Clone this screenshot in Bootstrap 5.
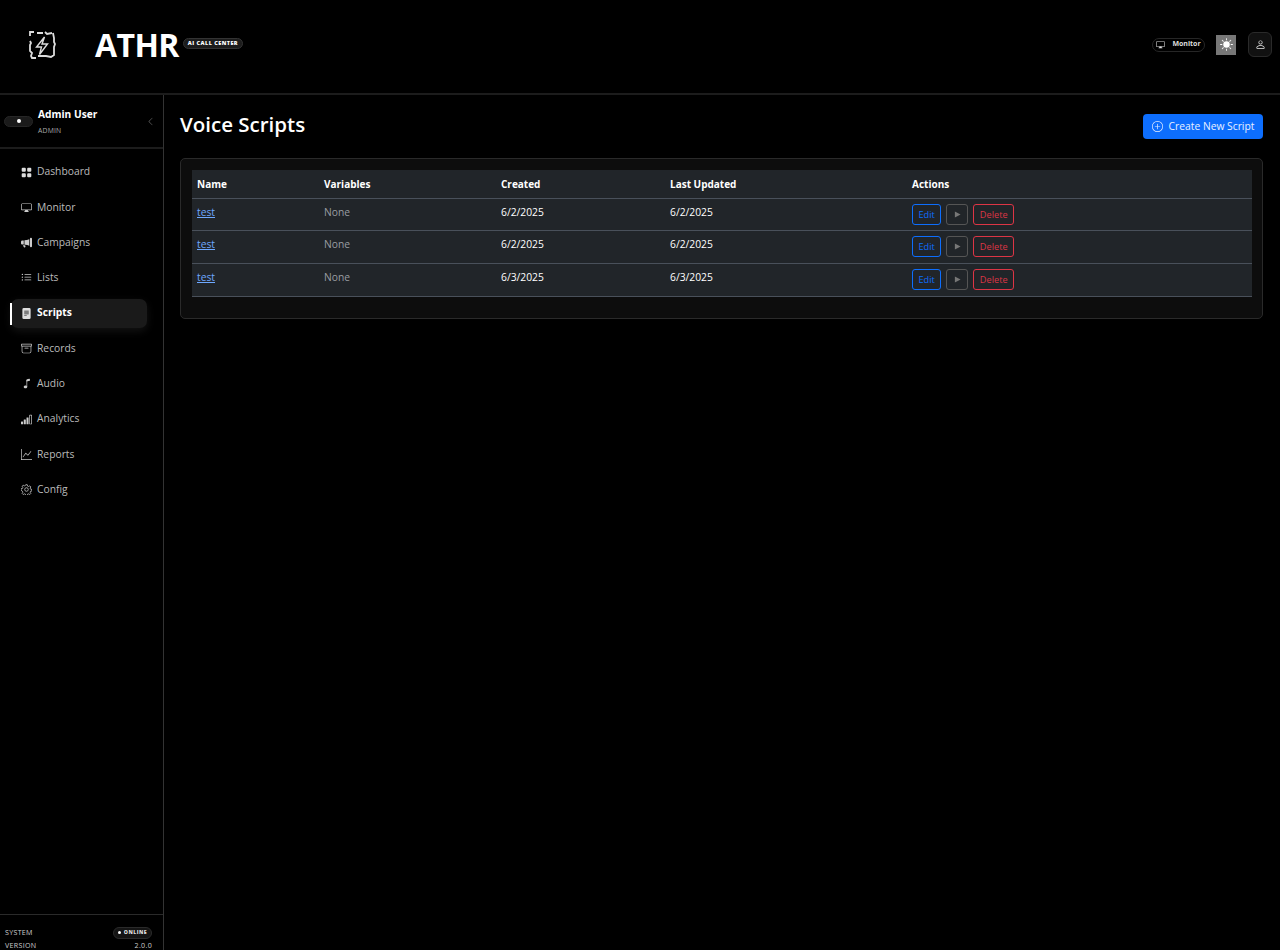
<!DOCTYPE html>
<html lang="en" data-bs-theme="dark">
<head>
<meta charset="utf-8">
<title>Voice Scripts</title>
<link href="https://cdn.jsdelivr.net/npm/bootstrap@5.3.0/dist/css/bootstrap.min.css" rel="stylesheet">
<style>
html,body{height:950px;overflow:hidden;background:#000;}
body{font-family:"Open Sans","Noto Sans",sans-serif;color:#fff;}
.top-bar{height:95px;border-bottom:2px solid #1c1c1c;padding:0 8px 4px 27px;}
.brand-name{font-size:32px;font-weight:700;line-height:1;margin-left:38px;letter-spacing:-.6px;}
.brand-pill{font-size:5.5px;font-weight:800;letter-spacing:.45px;background:#1c1c1c;border:1px solid #333;border-radius:20px;padding:1px 4px;margin-left:4px;line-height:7px;margin-top:-2px;}
.monitor-pill{font-size:7px;font-weight:700;color:#ddd;border:1px solid #262626;border-radius:20px;height:14px;width:53px;gap:7px;margin-right:11px;}
.sun-box{width:20px;height:20px;background:#777;margin-right:12px;}
.user-box{width:24px;height:25px;background:#111;border:1px solid #2a2a2a;border-radius:6px;}
.side-panel{width:164px;height:855px;border-right:1px solid #333;flex:none;}
.user-head{height:54px;border-bottom:2px solid #1c1c1c;padding:0 8px 0 4px;flex:none;}
.toggle-pill{width:29px;height:11px;border-radius:8px;background:#1a1a1a;border:1px solid #262626;margin-right:5px;}
.toggle-pill i{width:4px;height:4px;background:#fff;border-radius:50%;display:block;}
.user-text{margin-top:3px;}
.user-name{font-size:10.2px;font-weight:700;line-height:15px;margin-top:-3px;}
.user-role{font-size:6.8px;color:#aaa;line-height:9px;margin-top:4px;letter-spacing:.2px;}
.side-menu{padding-top:8.5px;gap:6.3px;}
.menu-link{height:29px;margin:0 16px 0 11px;padding-left:10px;gap:5px;font-size:10.3px;color:#bbb;border-radius:7px;text-decoration:none;position:relative;}
.menu-link svg{width:11px;height:11px;flex:none;}
.menu-link.is-active{color:#fff;font-weight:700;background:#1a1a1a;box-shadow:0 3px 8px rgba(40,40,40,.5);}
.menu-link.is-active::before{content:"";position:absolute;left:-1px;top:4px;bottom:3px;width:1.5px;background:#fff;}
.side-foot{height:36px;border-top:1px solid #2a2a2a;padding:11px 11px 0 5px;font-size:7.1px;color:#ccc;letter-spacing:.3px;overflow:hidden;flex:none;}
.foot-row{height:13px;}
.online-pill{font-size:5.2px;font-weight:800;letter-spacing:.45px;background:#141414;border:1px solid #2a2a2a;border-radius:20px;padding:1px 4px;height:12px;gap:3px;color:#ddd;}
.online-pill i{width:3px;height:3px;background:#fff;border-radius:50%;display:block;}
.content-area{padding:19px 17px 0 16px;}
.page-title{font-size:20.5px;font-weight:600;margin:-5px 0 0;line-height:24px;}
.new-btn{background:#0d6efd;color:#e8f0ff;font-size:10.3px;height:25px;width:120px;border-radius:4px;gap:6px;border:0;padding:0;}
.new-btn svg{width:11px;height:11px;}
.head-row{height:25px;margin-bottom:19px;}
.script-panel{background:#0d0d0d;border:1px solid #2a2a2a;border-radius:5px;padding:11px 10px 21px 11px;}
.script-table{--bs-table-bg:#212529;--bs-table-color:#fff;width:1060px;margin:0;font-size:10.3px;table-layout:fixed;border-color:#49505a;}
.script-table th{height:28px;padding:1px 5px 0;font-weight:700;vertical-align:middle;border-bottom:1px solid #49505a;font-size:10px;}
.script-table td{height:32.7px;padding:6px 5px 0;vertical-align:top;border-bottom:1px solid #49505a;}
.script-table td.cell-btns{padding-top:5px;}
.script-link{color:#6ea8fe;}
.none-text{color:#9a9da1;}
.tiny-btn{font-size:9.2px;height:21px;padding:0 5.5px;border-radius:3px;--bs-btn-bg:transparent;line-height:19px;}
.tiny-btn svg{width:7px;height:7px;}
.btn-play{width:22px;padding:0;border-color:#555;color:#6c757d;}
.cell-acts{gap:5px;}
</style>
</head>
<body>
<header class="top-bar d-flex align-items-center">
  <svg width="30" height="30" viewBox="0 0 30 30" fill="none" stroke="#ddd" stroke-width="1.8" aria-hidden="true">
    <path d="M3 6V2h4M10 3h6M18 2l2 2 5-1M26 3l1 5v4l1 2-1 3v8l-3 2-5-1H11M9 28H5l-1-2 1-3-2-2v-6l1-2-1-2"/>
    <path d="M17.500 7 9.500 17h5l-2 7.500 8-10.500h-5.500z" stroke-width="1.400"/>
  </svg>
  <span class="brand-name">ATHR</span>
  <span class="brand-pill">AI CALL CENTER</span>
  <div class="ms-auto d-flex align-items-center">
    <span class="monitor-pill d-flex align-items-center justify-content-center">
      <svg width="9" height="9" viewBox="0 0 16 16" fill="#ddd"><path d="M0 4s0-2 2-2h12s2 0 2 2v6s0 2-2 2h-4c0 .667.083 1.167.25 1.5H11a.5.5 0 0 1 0 1H5a.5.5 0 0 1 0-1h.75c.167-.333.25-.833.25-1.5H2s-2 0-2-2V4zm1.398-.855a.758.758 0 0 0-.254.302A1.46 1.46 0 0 0 1 4.01V10c0 .325.078.502.145.602.07.105.17.188.302.254a1.464 1.464 0 0 0 .538.143L2.01 11H14c.325 0 .502-.078.602-.145a.758.758 0 0 0 .254-.302 1.464 1.464 0 0 0 .143-.538L15 9.99V4c0-.325-.078-.502-.145-.602a.757.757 0 0 0-.302-.254A1.46 1.46 0 0 0 13.99 3H2c-.325 0-.502.078-.602.145z"/></svg>
      Monitor
    </span>
    <span class="sun-box d-flex align-items-center justify-content-center">
      <svg width="13" height="13" viewBox="0 0 16 16" fill="#fff"><path d="M8 12a4 4 0 1 0 0-8 4 4 0 0 0 0 8zM8 0a.5.5 0 0 1 .5.5v2a.5.5 0 0 1-1 0v-2A.5.5 0 0 1 8 0zm0 13a.5.5 0 0 1 .5.5v2a.5.5 0 0 1-1 0v-2A.5.5 0 0 1 8 13zm8-5a.5.5 0 0 1-.5.5h-2a.5.5 0 0 1 0-1h2a.5.5 0 0 1 .5.5zM3 8a.5.5 0 0 1-.5.5h-2a.5.5 0 0 1 0-1h2A.5.5 0 0 1 3 8zm10.657-5.657a.5.5 0 0 1 0 .707l-1.414 1.415a.5.5 0 1 1-.707-.708l1.414-1.414a.5.5 0 0 1 .707 0zm-9.193 9.193a.5.5 0 0 1 0 .707L3.05 13.657a.5.5 0 0 1-.707-.707l1.414-1.414a.5.5 0 0 1 .707 0zm9.193 2.121a.5.5 0 0 1-.707 0l-1.414-1.414a.5.5 0 0 1 .707-.707l1.414 1.414a.5.5 0 0 1 0 .707zM4.464 4.465a.5.5 0 0 1-.707 0L2.343 3.05a.5.5 0 1 1 .707-.707l1.414 1.414a.5.5 0 0 1 0 .708z"/></svg>
    </span>
    <span class="user-box d-flex align-items-center justify-content-center">
      <svg width="11" height="11" viewBox="0 0 16 16" fill="#eee"><path d="M8 8a3 3 0 1 0 0-6 3 3 0 0 0 0 6zm2-3a2 2 0 1 1-4 0 2 2 0 0 1 4 0zm4 8c0 1-1 1-1 1H3s-1 0-1-1 1-4 6-4 6 3 6 4zm-1-.004c-.001-.246-.154-.986-.832-1.664C11.516 10.68 10.289 10 8 10c-2.29 0-3.516.68-4.168 1.332-.678.678-.83 1.418-.832 1.664h10z"/></svg>
    </span>
  </div>
</header>
<div class="d-flex">
  <aside class="side-panel d-flex flex-column">
    <div class="user-head d-flex align-items-center">
      <span class="toggle-pill d-flex align-items-center justify-content-center"><i></i></span>
      <div class="user-text">
        <div class="user-name">Admin User</div>
        <div class="user-role">ADMIN</div>
      </div>
      <svg class="ms-auto" width="9" height="9" viewBox="0 0 16 16" fill="#666"><path fill-rule="evenodd" d="M11.354 1.646a.5.5 0 0 1 0 .708L5.707 8l5.647 5.646a.5.5 0 0 1-.708.708l-6-6a.5.5 0 0 1 0-.708l6-6a.5.5 0 0 1 .708 0z"/></svg>
    </div>
    <nav class="side-menu d-flex flex-column">
      <a class="menu-link d-flex align-items-center" href="#"><svg viewBox="0 0 16 16" fill="#ddd"><path d="M1 2.500A1.500 1.500 0 0 1 2.500 1h3A1.500 1.500 0 0 1 7 2.500v3A1.500 1.500 0 0 1 5.500 7h-3A1.500 1.500 0 0 1 1 5.500v-3zm8 0A1.500 1.500 0 0 1 10.500 1h3A1.500 1.500 0 0 1 15 2.500v3A1.500 1.500 0 0 1 13.500 7h-3A1.500 1.500 0 0 1 9 5.500v-3zm-8 8A1.500 1.500 0 0 1 2.500 9h3A1.500 1.500 0 0 1 7 10.500v3A1.500 1.500 0 0 1 5.500 15h-3A1.500 1.500 0 0 1 1 13.500v-3zm8 0A1.500 1.500 0 0 1 10.500 9h3a1.500 1.500 0 0 1 1.500 1.500v3a1.500 1.500 0 0 1-1.500 1.500h-3A1.500 1.500 0 0 1 9 13.500v-3z"/></svg>Dashboard</a>
      <a class="menu-link d-flex align-items-center" href="#"><svg viewBox="0 0 16 16" fill="#ccc"><path d="M0 4s0-2 2-2h12s2 0 2 2v6s0 2-2 2h-4c0 .667.083 1.167.25 1.500H11a.5.5 0 0 1 0 1H5a.5.5 0 0 1 0-1h.75c.167-.333.25-.833.25-1.500H2s-2 0-2-2V4zm1.398-.855a.758.758 0 0 0-.254.302A1.460 1.460 0 0 0 1 4.010V10c0 .325.078.502.145.602.07.105.17.188.302.254a1.464 1.464 0 0 0 .538.143L2.010 11H14c.325 0 .502-.078.602-.145a.758.758 0 0 0 .254-.302 1.464 1.464 0 0 0 .143-.538L15 9.990V4c0-.325-.078-.502-.145-.602a.757.757 0 0 0-.302-.254A1.460 1.460 0 0 0 13.990 3H2c-.325 0-.502.078-.602.145z"/></svg>Monitor</a>
      <a class="menu-link d-flex align-items-center" href="#"><svg viewBox="0 0 16 16" fill="#ccc"><path d="M13 2.500a1.500 1.500 0 0 1 3 0v11a1.500 1.500 0 0 1-3 0v-11zm-1 .724c-2.067.95-4.539 1.481-7 1.656v6.237a25.222 25.222 0 0 1 1.088.085c2.053.204 4.038.668 5.912 1.560V3.224zm-8 7.841V4.934c-.68.027-1.399.043-2.008.053A2.020 2.020 0 0 0 0 7v2c0 1.106.896 1.996 1.994 2.009a68.140 68.140 0 0 1 .496.008 64 64 0 0 1 1.510.048zm1.390 1.081c.285.021.569.047.850.078l.253 1.690a1 1 0 0 1-.983 1.187h-.548a1 1 0 0 1-.916-.599l-1.314-2.480a65.810 65.810 0 0 1 1.692.064c.327.017.650.037.966.060z"/></svg>Campaigns</a>
      <a class="menu-link d-flex align-items-center" href="#"><svg viewBox="0 0 16 16" fill="#ccc"><path fill-rule="evenodd" d="M5 11.500a.5.5 0 0 1 .5-.5h9a.5.5 0 0 1 0 1h-9a.5.5 0 0 1-.5-.5zm0-4a.5.5 0 0 1 .5-.5h9a.5.5 0 0 1 0 1h-9a.5.5 0 0 1-.5-.5zm0-4a.5.5 0 0 1 .5-.5h9a.5.5 0 0 1 0 1h-9a.5.5 0 0 1-.5-.5zm-3 1a1 1 0 1 0 0-2 1 1 0 0 0 0 2zm0 4a1 1 0 1 0 0-2 1 1 0 0 0 0 2zm0 4a1 1 0 1 0 0-2 1 1 0 0 0 0 2z"/></svg>Lists</a>
      <a class="menu-link is-active d-flex align-items-center" href="#"><svg viewBox="0 0 16 16" fill="#ddd"><path d="M12 0H4a2 2 0 0 0-2 2v12a2 2 0 0 0 2 2h8a2 2 0 0 0 2-2V2a2 2 0 0 0-2-2zM5 4h6a.5.5 0 0 1 0 1H5a.5.5 0 0 1 0-1zm-.5 2.500A.5.5 0 0 1 5 6h6a.5.5 0 0 1 0 1H5a.5.5 0 0 1-.5-.5zM5 8h6a.5.5 0 0 1 0 1H5a.5.5 0 0 1 0-1zm0 2h3a.5.5 0 0 1 0 1H5a.5.5 0 0 1 0-1z"/></svg>Scripts</a>
      <a class="menu-link d-flex align-items-center" href="#"><svg viewBox="0 0 16 16" fill="#ccc"><path d="M0 2a1 1 0 0 1 1-1h14a1 1 0 0 1 1 1v2a1 1 0 0 1-1 1v7.500a2.500 2.500 0 0 1-2.500 2.500h-9A2.500 2.500 0 0 1 1 12.500V5a1 1 0 0 1-1-1V2zm2 3v7.500A1.500 1.500 0 0 0 3.500 14h9a1.500 1.500 0 0 0 1.500-1.500V5H2zm13-3H1v2h14V2zM5 7.500a.5.5 0 0 1 .5-.5h5a.5.5 0 0 1 0 1h-5a.5.5 0 0 1-.5-.5z"/></svg>Records</a>
      <a class="menu-link d-flex align-items-center" href="#"><svg viewBox="0 0 16 16" fill="#ccc"><path d="M9 13c0 1.105-1.120 2-2.500 2S4 14.105 4 13s1.120-2 2.500-2 2.500.895 2.500 2z"/><path fill-rule="evenodd" d="M9 3v10H8V3h1z"/><path d="M8 2.820a1 1 0 0 1 .804-.981l3-.600A1 1 0 0 1 13 2.220V4L8 5V2.820z"/></svg>Audio</a>
      <a class="menu-link d-flex align-items-center" href="#"><svg viewBox="0 0 16 16" fill="#ccc"><path d="M0 11.500a.5.5 0 0 1 .5-.5h2a.5.5 0 0 1 .5.5v3a.5.5 0 0 1-.5.5h-2a.5.5 0 0 1-.5-.5v-3zm4-3a.5.5 0 0 1 .5-.5h2a.5.5 0 0 1 .5.5v6a.5.5 0 0 1-.5.5h-2a.5.5 0 0 1-.5-.5v-6zm4-3a.5.5 0 0 1 .5-.5h2a.5.5 0 0 1 .5.5v9a.5.5 0 0 1-.5.5h-2a.5.5 0 0 1-.5-.5v-9zM12 2a1 1 0 0 1 1-1h2a1 1 0 0 1 1 1v12a1 1 0 0 1-1 1h-2a1 1 0 0 1-1-1V2zm1 12h2V2h-2v12z"/></svg>Analytics</a>
      <a class="menu-link d-flex align-items-center" href="#"><svg viewBox="0 0 16 16" fill="#ccc"><path fill-rule="evenodd" d="M0 0h1v15h15v1H0V0zm14.817 3.113a.5.5 0 0 1 .07.704l-4.500 5.500a.5.5 0 0 1-.74.037L7.060 6.767l-3.656 5.027a.5.5 0 0 1-.808-.588l4-5.500a.5.5 0 0 1 .758-.060l2.609 2.610 4.150-5.073a.5.5 0 0 1 .704-.070z"/></svg>Reports</a>
      <a class="menu-link d-flex align-items-center" href="#"><svg viewBox="0 0 16 16" fill="none" stroke="#ccc" stroke-width="1.1"><circle cx="8" cy="8" r="2.600"/><path d="M6.900 1h2.200l.4 2 1.500.700 1.800-1 1.500 1.500-1 1.800.6 1.500 2.100.4v2.200l-2.100.4-.6 1.500 1 1.800-1.500 1.500-1.800-1-1.500.6-.4 2.100H6.900l-.4-2.100-1.500-.6-1.800 1-1.500-1.500 1-1.800-.6-1.500L0 9.100V6.900l2.100-.4.6-1.500-1-1.800 1.500-1.500 1.800 1 1.500-.7z"/></svg>Config</a>
    </nav>
    <div class="side-foot mt-auto">
      <div class="foot-row d-flex justify-content-between align-items-center"><span>SYSTEM</span><span class="online-pill d-flex align-items-center"><i></i>ONLINE</span></div>
      <div class="foot-row d-flex justify-content-between align-items-center"><span>VERSION</span><span>2.0.0</span></div>
    </div>
  </aside>
  <main class="content-area flex-grow-1">
    <div class="head-row d-flex justify-content-between align-items-center">
      <h1 class="page-title">Voice Scripts</h1>
      <button class="new-btn btn d-flex align-items-center justify-content-center" type="button"><svg viewBox="0 0 16 16" fill="currentColor"><path d="M8 15A7 7 0 1 1 8 1a7 7 0 0 1 0 14zm0 1A8 8 0 1 0 8 0a8 8 0 0 0 0 16z"/><path d="M8 4a.5.5 0 0 1 .5.5v3h3a.5.5 0 0 1 0 1h-3v3a.5.5 0 0 1-1 0v-3h-3a.5.5 0 0 1 0-1h3v-3A.5.5 0 0 1 8 4z"/></svg>Create New Script</button>
    </div>
    <div class="script-panel">
      <table class="table script-table">
        <colgroup><col style="width:127px"><col style="width:177px"><col style="width:169px"><col style="width:242px"><col></colgroup>
        <thead><tr><th>Name</th><th>Variables</th><th>Created</th><th>Last Updated</th><th>Actions</th></tr></thead>
        <tbody>
          <tr><td><a class="script-link" href="#">test</a></td><td class="none-text">None</td><td>6/2/2025</td><td>6/2/2025</td><td class="cell-btns"><div class="d-flex cell-acts"><button class="btn btn-outline-primary tiny-btn" type="button">Edit</button><button class="btn btn-outline-secondary tiny-btn btn-play d-flex align-items-center justify-content-center" type="button" aria-label="Play"><svg viewBox="0 0 16 16" fill="#777"><path d="M2 1v14l13-7z"/></svg></button><button class="btn btn-outline-danger tiny-btn" type="button">Delete</button></div></td></tr>
          <tr><td><a class="script-link" href="#">test</a></td><td class="none-text">None</td><td>6/2/2025</td><td>6/2/2025</td><td class="cell-btns"><div class="d-flex cell-acts"><button class="btn btn-outline-primary tiny-btn" type="button">Edit</button><button class="btn btn-outline-secondary tiny-btn btn-play d-flex align-items-center justify-content-center" type="button" aria-label="Play"><svg viewBox="0 0 16 16" fill="#777"><path d="M2 1v14l13-7z"/></svg></button><button class="btn btn-outline-danger tiny-btn" type="button">Delete</button></div></td></tr>
          <tr><td><a class="script-link" href="#">test</a></td><td class="none-text">None</td><td>6/3/2025</td><td>6/3/2025</td><td class="cell-btns"><div class="d-flex cell-acts"><button class="btn btn-outline-primary tiny-btn" type="button">Edit</button><button class="btn btn-outline-secondary tiny-btn btn-play d-flex align-items-center justify-content-center" type="button" aria-label="Play"><svg viewBox="0 0 16 16" fill="#777"><path d="M2 1v14l13-7z"/></svg></button><button class="btn btn-outline-danger tiny-btn" type="button">Delete</button></div></td></tr>
        </tbody>
      </table>
    </div>
  </main>
</div>
<script src="https://cdn.jsdelivr.net/npm/bootstrap@5.3.0/dist/js/bootstrap.bundle.min.js"></script>
</body>
</html>
